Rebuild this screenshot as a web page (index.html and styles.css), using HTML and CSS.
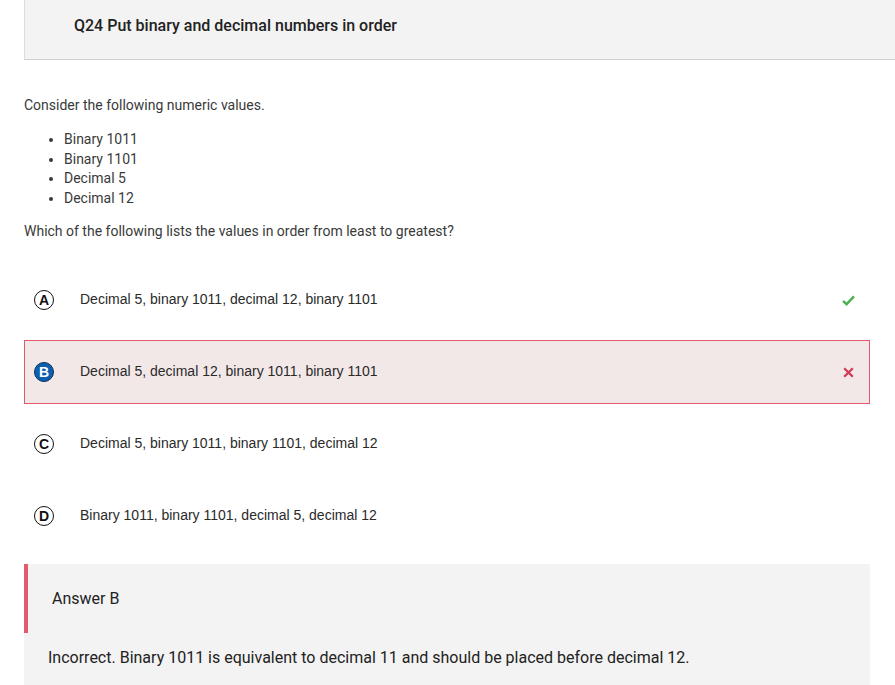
FILE: index.html
```html
<!DOCTYPE html>
<html>
<head>
<meta charset="utf-8">
<link rel="stylesheet" href="styles.css">
</head>
<body>
<div class="header">
  <h1 class="title">Q24 Put binary and decimal numbers in order</h1>
</div>
<div class="content">
  <p class="intro">Consider the following numeric values.</p>
  <ul class="values">
    <li>Binary 1011</li>
    <li>Binary 1101</li>
    <li>Decimal 5</li>
    <li>Decimal 12</li>
  </ul>
  <p class="question">Which of the following lists the values in order from least to greatest?</p>

  <div class="options">
    <div class="option">
      <span class="letter">A</span>
      <span class="opt-text">Decimal 5, binary 1011, decimal 12, binary 1101</span>
      <svg class="mark" width="13" height="11" viewBox="0 0 13 11"><path d="M1 5.8 L4.6 9.2 L12 1.4" fill="none" stroke="#4caf50" stroke-width="2.4"/></svg>
    </div>
    <div class="option selected">
      <span class="letter filled">B</span>
      <span class="opt-text">Decimal 5, decimal 12, binary 1011, binary 1101</span>
      <svg class="mark cross" width="11" height="11" viewBox="0 0 11 11"><path d="M1.2 1.2 L9.8 9.8 M9.8 1.2 L1.2 9.8" fill="none" stroke="#d13a55" stroke-width="2.3"/></svg>
    </div>
    <div class="option">
      <span class="letter">C</span>
      <span class="opt-text">Decimal 5, binary 1011, binary 1101, decimal 12</span>
    </div>
    <div class="option">
      <span class="letter">D</span>
      <span class="opt-text">Binary 1011, binary 1101, decimal 5, decimal 12</span>
    </div>
  </div>
</div>
<div class="answer">
  <div class="answer-head">Answer B</div>
  <div class="answer-body">Incorrect. Binary 1011 is equivalent to decimal 11 and should be placed before decimal 12.</div>
</div>
</body>
</html>
```
FILE: styles.css
```css
html, body {
  margin: 0;
  padding: 0;
  background: #ffffff;
}
body {
  font-family: Roboto, "Liberation Sans", sans-serif;
  color: #333333;
  overflow: hidden;
}
.header {
  margin-left: 24px;
  height: 60px;
  box-sizing: border-box;
  background: #f3f3f3;
  border-left: 1px solid #dcdcdc;
  border-bottom: 1px solid #cfcfcf;
  padding: 16px 0 0 49px;
}
.title {
  margin: 0;
  font-size: 16px;
  font-weight: 500;
  line-height: 20px;
  color: #222222;
}
.content {
  margin: 0 25px 0 24px;
}
.intro {
  margin: 36px 0 0;
  font-size: 14px;
  line-height: 18px;
  color: #3a3a3a;
}
.values {
  margin: 16px 0 0;
  padding-left: 40px;
  font-size: 14px;
  line-height: 19.5px;
  color: #3a3a3a;
}
.question {
  margin: 14px 0 0;
  font-size: 14px;
  line-height: 18px;
  color: #3a3a3a;
}
.options {
  margin-top: 28px;
  display: flex;
  flex-direction: column;
  gap: 8px;
}
.option {
  height: 64px;
  box-sizing: border-box;
  display: flex;
  align-items: center;
  padding: 0 14px 0 9px;
  border: 1px solid transparent;
}
.option.selected {
  background: #f3e8e8;
  border-color: #e35b6b;
}
.letter {
  width: 20px;
  height: 20px;
  box-sizing: border-box;
  border: 1.5px solid #111;
  border-radius: 50%;
  display: flex;
  align-items: center;
  justify-content: center;
  font-family: "Liberation Sans", Arial, sans-serif;
  font-weight: bold;
  font-size: 14px;
  line-height: 1;
  color: #111;
  flex: none;
}
.letter.filled {
  background: #0f5fb0;
  border-color: #0a2f5a;
  color: #ffffff;
}
.opt-text {
  margin-left: 26px;
  font-family: "Liberation Sans", Arial, sans-serif;
  font-size: 14px;
  line-height: 16px;
  padding-bottom: 2px;
  color: #2a2a2a;
  flex: 1;
}
.mark {
  flex: none;
}
.mark.cross {
  margin-right: 1px;
}
.answer {
  margin: 16px 25px 0 24px;
  background: #f3f3f3;
  padding-bottom: 20px;
}
.answer-head {
  height: 69px;
  box-sizing: border-box;
  border-left: 4px solid #e35b6b;
  padding: 25px 0 0 24px;
  font-size: 16px;
  line-height: 20px;
  color: #222222;
}
.answer-body {
  padding: 15px 0 0 24px;
  font-size: 16px;
  line-height: 20px;
  color: #222222;
}
```
